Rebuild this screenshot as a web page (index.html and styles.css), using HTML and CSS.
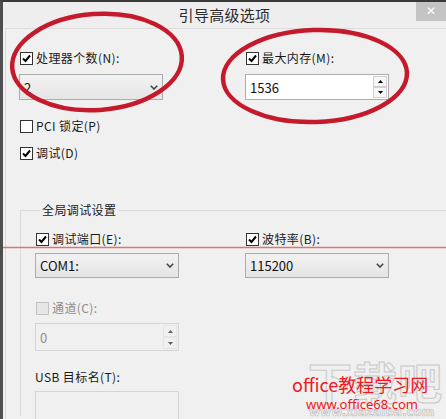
FILE: index.html
```html
<!doctype html>
<html>
  <head>
    <meta charset="UTF-8" />
    <link rel="stylesheet" href="styles.css">
  </head>
  <body>
    <div class="window">
      <div class="titlebar">
        <span></span>
        <div class="title">引导高级选项</div>
        <div class="close">✕</div>
      </div>

      <div class="panel">
        <div class="grid top">
          <label class="check"><span class="box on"></span>处理器个数(N):</label>
          <label class="check"><span class="box on"></span>最大内存(M):</label>
          <div class="select tall"><span>2</span><span class="chev"></span></div>
          <div class="numbox tall">
            <span>1536</span>
            <div class="spin">
              <span class="up"></span>
              <span class="down"></span>
            </div>
          </div>
        </div>

        <label class="check row pci"><span class="box"></span>PCI 锁定(P)</label>
        <label class="check row dbg"><span class="box on"></span>调试(D)</label>

        <fieldset class="group">
          <legend>全局调试设置</legend>
          <div class="grid inner">
            <label class="check"><span class="box on"></span>调试端口(E):</label>
            <label class="check"><span class="box on"></span>波特率(B):</label>
            <div class="select"><span>COM1:</span><span class="chev"></span></div>
            <div class="select"><span>115200</span><span class="chev"></span></div>
          </div>
          <label class="check row off chan"><span class="box"></span>通道(C):</label>
          <div class="numbox off chanbox">
            <span>0</span>
            <div class="spin">
              <span class="up"></span>
              <span class="down"></span>
            </div>
          </div>
          <div class="usb">USB 目标名(T):</div>
          <div class="textbox"></div>
        </fieldset>
      </div>

      <svg class="marks" width="446" height="419" viewBox="0 0 446 419">
        <ellipse cx="97" cy="62" rx="85" ry="48" transform="rotate(-4 97 62)" />
        <ellipse cx="315" cy="76" rx="92" ry="46" transform="rotate(-2 315 76)" />
        <line x1="0" y1="247.5" x2="446" y2="247.5" class="redline" />
      </svg>

      <div class="watermark">
        <div class="ghost">下载吧</div>
        <div class="ghost-url">www.xiazaiba.com</div>
        <div class="brand">office教程学习网</div>
        <div class="url">www.office68.com</div>
      </div>
    </div>
  </body>
</html>
```

FILE: styles.css
```css
html,
body {
  margin: 0;
  width: 446px;
  height: 419px;
  overflow: hidden;
  background: #f0f0f0;
  font-family: "Noto Sans CJK SC", "Noto Sans", sans-serif;
  font-size: 12px;
  color: #1a1a1a;
}
.window {
  position: relative;
  height: 417px;
  overflow: hidden;
  border-top: 2px solid #3a3a3a;
  border-left: 3px solid #4e4e4e;
  background: #f0f0f0;
}
.titlebar {
  display: grid;
  grid-template-columns: 1fr auto 1fr;
  height: 26px;
  background: #eeeeee;
}
.title {
  font-size: 15px;
  line-height: 26px;
  letter-spacing: 0.3px;
  color: #2b2b2b;
}
.close {
  justify-self: end;
  width: 30px;
  height: 19px;
  background: #c4c4c4;
  color: #fff;
  font-family: "DejaVu Sans", sans-serif;
  font-size: 12px;
  line-height: 19px;
  text-align: center;
}
.panel {
  margin-left: 2px;
  height: 390px;
  border-top: 1px solid #dcdcdc;
  border-left: 1px solid #dcdcdc;
  padding: 21px 0 0 13px;
}
.grid {
  display: grid;
  row-gap: 8px;
  justify-items: start;
}
.top {
  grid-template-columns: 226px 144px;
}
.inner {
  grid-template-columns: 210px 144px;
  row-gap: 6px;
}
.check {
  display: flex;
  align-items: center;
  gap: 3px;
  height: 16px;
  line-height: 16px;
  letter-spacing: 0.4px;
  white-space: nowrap;
}
.box {
  box-sizing: border-box;
  width: 13px;
  height: 13px;
  margin-left: 1px;
  border: 1px solid #333;
  background: #fff;
}
.box.on {
  background: #fff url("data:image/svg+xml;utf8,<svg xmlns='http://www.w3.org/2000/svg' width='11' height='11'><path d='M2 5.5 L4.5 8 L9 2.5' fill='none' stroke='black' stroke-width='2'/></svg>") no-repeat center;
}
.off {
  color: #8c8c8c;
}
.off .box {
  border-color: #c2c2c2;
  background: #e6e6e6;
}
.pci {
  margin-top: 18px;
}
.dbg {
  margin-top: 11px;
}
.select,
.numbox {
  box-sizing: border-box;
  display: flex;
  align-items: center;
  justify-content: space-between;
  width: 144px;
  height: 25px;
  padding-left: 4px;
  font-size: 13px;
  color: #111;
}
.select {
  border: 1px solid #acacac;
  background: linear-gradient(#f2f2f2, #e5e5e5);
  padding-right: 4px;
}
.tall {
  height: 26px;
}
.chev {
  width: 8px;
  height: 5px;
  background: url("data:image/svg+xml;utf8,<svg xmlns='http://www.w3.org/2000/svg' width='8' height='5'><path d='M0.8 0.8 L4 4 L7.2 0.8' fill='none' stroke='%23444' stroke-width='1.6'/></svg>") no-repeat;
}
.numbox {
  border: 1px solid #abadb3;
  background: #fff;
  padding-right: 1px;
}
.spin {
  display: flex;
  flex-direction: column;
  width: 14px;
  height: calc(100% - 2px);
}
.spin span {
  flex: 1;
  box-sizing: border-box;
  border: 1px solid #d0d0d0;
  background: #f7f7f7 no-repeat center;
}
.spin .up {
  background-image: url("data:image/svg+xml;utf8,<svg xmlns='http://www.w3.org/2000/svg' width='5' height='3'><path d='M0 3 L2.5 0 L5 3Z' fill='black'/></svg>");
}
.spin .down {
  background-image: url("data:image/svg+xml;utf8,<svg xmlns='http://www.w3.org/2000/svg' width='5' height='3'><path d='M0 0 L2.5 3 L5 0Z' fill='black'/></svg>");
}
.numbox.off {
  background: #f0f0f0;
  border-color: #d5d5d5;
  color: #8c8c8c;
}
.numbox.off .spin span {
  border-color: #dedede;
  background-color: #f0f0f0;
  opacity: 0.6;
}
.group {
  width: 412px;
  margin: 41px 0 0 1px;
  padding: 13px 0 0 14px;
  border: 1px solid #dcdcdc;
  border-bottom: none;
  height: 200px;
}
.group legend {
  margin-left: 5px;
  padding: 0 2px;
  line-height: 16px;
  letter-spacing: 0.4px;
}
.chan {
  margin-top: 22px;
}
.chanbox {
  height: 28px;
  margin-top: 7px;
}
.usb {
  margin-top: 18px;
  line-height: 16px;
  letter-spacing: 0.4px;
}
.textbox {
  box-sizing: border-box;
  width: 144px;
  height: 50px;
  margin-top: 6px;
  border: 1px solid #d5d5d5;
  background: #f0f0f0;
}
.marks {
  position: absolute;
  left: -3px;
  top: -2px;
  pointer-events: none;
}
.marks ellipse {
  fill: none;
  stroke: #c41a2b;
  stroke-width: 4.5;
}
.marks .redline {
  stroke: #de7474;
  stroke-width: 1.5;
}
.watermark {
  position: absolute;
  left: 284px;
  top: 350px;
  width: 160px;
}
.ghost {
  position: absolute;
  left: 21px;
  top: -3px;
  font-size: 44px;
  font-weight: bold;
  letter-spacing: 1px;
  color: transparent;
  -webkit-text-stroke: 1px #c9c9c9;
}
.ghost-url {
  position: absolute;
  left: 22px;
  top: 53px;
  font-family: "DejaVu Sans", sans-serif;
  font-size: 12px;
  font-weight: bold;
  color: transparent;
  -webkit-text-stroke: 0.7px #c2c2c2;
}
.brand {
  position: absolute;
  left: 5px;
  top: 20px;
  font-size: 18px;
  line-height: 24px;
  color: #f01822;
  white-space: nowrap;
}
.url {
  position: absolute;
  left: 19px;
  top: 44px;
  font-family: "Noto Sans", sans-serif;
  font-size: 13px;
  line-height: 16px;
  color: #f01822;
  white-space: nowrap;
}
```
